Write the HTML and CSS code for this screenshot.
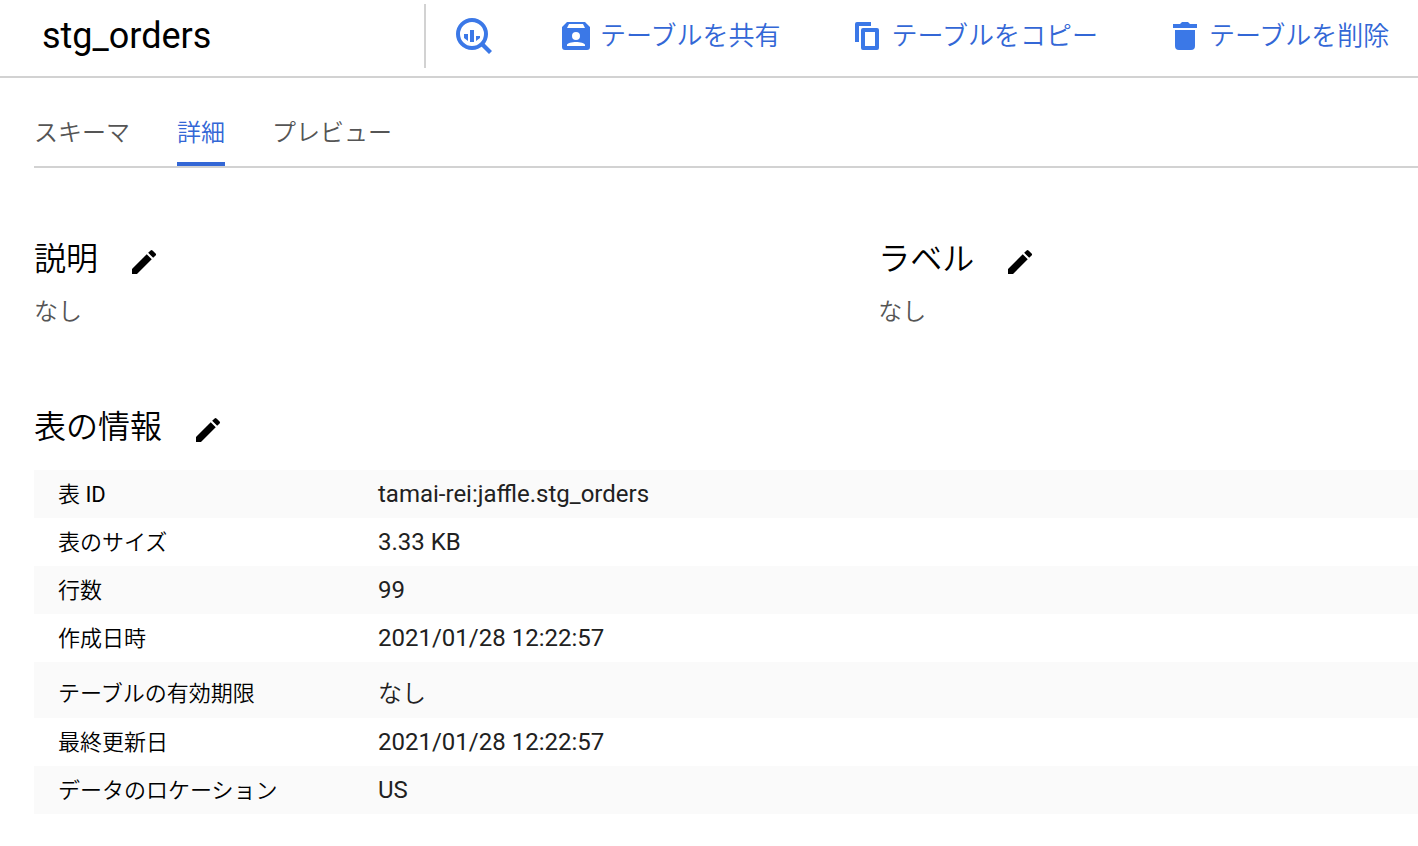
FILE: index.html
```html
<!DOCTYPE html>
<html lang="ja">
<head>
<meta charset="utf-8">
<title>stg_orders</title>
<link rel="stylesheet" href="styles.css">
</head>
<body>
<svg class="sprite" aria-hidden="true">
  <symbol id="pencil" viewBox="0 0 24 24"><path d="M3 17.25V21h3.75L17.81 9.94l-3.75-3.75L3 17.25zM20.71 7.04a1 1 0 0 0 0-1.41l-2.34-2.34a1 1 0 0 0-1.41 0l-1.83 1.83 3.75 3.75 1.83-1.83z"/></symbol>
</svg>
<header class="toolbar">
  <h1 class="title">stg_orders</h1>
  <div class="tools">
    <button class="tool" type="button" aria-label="クエリ">
      <svg class="icon-query" viewBox="0 0 36 36"><circle cx="16" cy="16" r="14" fill="none" stroke="currentColor" stroke-width="4"/><path d="M8 16h4v7l-4-3zM14 12h4v12h-4zM20 18h4v2l-4 3zM24 27l3-3 9 9-3 3z"/></svg>
    </button>
    <nav class="actions" aria-label="テーブル操作">
      <button class="tool" type="button">
        <svg class="icon" viewBox="0 0 28 28"><path fill-rule="evenodd" d="M5 0h18l5 5v20a3 3 0 0 1-3 3H3a3 3 0 0 1-3-3V5zM7 2 5 6h18l-2-4zM14 10a4 4 0 1 0 0 8 4 4 0 0 0 0-8zM5 24h18v-1c0-2-5-3-9-3s-9 1-9 3z"/></svg>
        テーブルを共有
      </button>
      <button class="tool" type="button">
        <svg class="icon" viewBox="0 0 28 28"><path fill-rule="evenodd" d="M4 0h14v4H6v16H2V2a2 2 0 0 1 2-2zM10 6h14a2 2 0 0 1 2 2v18a2 2 0 0 1-2 2H10a2 2 0 0 1-2-2V8a2 2 0 0 1 2-2zm2 4v14h10V10z"/></svg>
        テーブルをコピー
      </button>
      <button class="tool" type="button">
        <svg class="icon" viewBox="0 0 28 28"><path d="M2 2h7l2-2h6l2 2h7v4H2zM4 8h20v16a4 4 0 0 1-4 4H8a4 4 0 0 1-4-4z"/></svg>
        テーブルを削除
      </button>
    </nav>
  </div>
</header>
<main class="content">
  <nav class="tabs">
    <a class="tab" href="#schema">スキーマ</a>
    <a class="tab tab-active" href="#details" aria-current="page">詳細</a>
    <a class="tab" href="#preview">プレビュー</a>
  </nav>
  <div class="meta">
    <section>
      <div class="heading"><h2>説明</h2><button class="edit" type="button" aria-label="説明を編集"><svg><use href="#pencil"/></svg></button></div>
      <p class="none">なし</p>
    </section>
    <section>
      <div class="heading"><h2>ラベル</h2><button class="edit" type="button" aria-label="ラベルを編集"><svg><use href="#pencil"/></svg></button></div>
      <p class="none">なし</p>
    </section>
  </div>
  <section class="info">
    <div class="heading"><h2>表の情報</h2><button class="edit" type="button" aria-label="表の情報を編集"><svg><use href="#pencil"/></svg></button></div>
    <table class="table">
      <tbody>
        <tr><th scope="row">表 <span class="latin">ID</span></th><td>tamai-rei:jaffle.stg_orders</td></tr>
        <tr><th scope="row">表のサイズ</th><td>3.33 KB</td></tr>
        <tr><th scope="row">行数</th><td>99</td></tr>
        <tr><th scope="row">作成日時</th><td>2021/01/28 12:22:57</td></tr>
        <tr class="expiry"><th scope="row">テーブルの有効期限</th><td>なし</td></tr>
        <tr><th scope="row">最終更新日</th><td>2021/01/28 12:22:57</td></tr>
        <tr><th scope="row">データのロケーション</th><td>US</td></tr>
      </tbody>
    </table>
  </section>
</main>
</body>
</html>
```
FILE: styles.css
```css
* { box-sizing: border-box; }
body {
  margin: 0;
  background: #fff;
  color: #000;
  font-family: Roboto, "Noto Sans CJK JP", sans-serif;
}
h1, h2, p { margin: 0; font-weight: 400; }
button {
  padding: 0;
  border: 0;
  background: none;
  font: inherit;
  color: inherit;
  cursor: pointer;
}
svg { display: block; fill: currentColor; }
.sprite { display: none; }

.toolbar {
  display: flex;
  height: 78px;
  padding: 4px 0 8px;
  border-bottom: 2px solid #d2d2d2;
}
.title {
  flex: 0 0 426px;
  padding-left: 42px;
  border-right: 2px solid #d2d2d2;
  font-size: 36px;
  line-height: 64px;
}
.tools {
  display: flex;
  align-items: center;
  gap: 70px;
  padding-left: 30px;
  color: #3367d6;
}
.actions { display: flex; gap: 73px; }
.tool {
  display: flex;
  align-items: center;
  gap: 10px;
  font-size: 26px;
  font-weight: 350;
  line-height: 36px;
  white-space: nowrap;
}
.icon { width: 28px; height: 28px; color: #3b78e7; }
.icon-query { width: 36px; height: 36px; color: #3b78e7; }

.content { padding-left: 34px; }
.tabs {
  display: flex;
  gap: 47px;
  padding-top: 34px;
  border-bottom: 2px solid #d2d2d2;
}
.tab {
  height: 54px;
  font-size: 24px;
  font-weight: 350;
  line-height: 42px;
  color: #555;
  text-decoration: none;
}
.tab-active { border-bottom: 4px solid #3367d6; color: #3367d6; }

.meta {
  display: grid;
  grid-template-columns: 61fr 39fr;
  padding-top: 66px;
}
.heading { display: flex; align-items: flex-start; gap: 30px; }
h2 { font-size: 32px; line-height: 50px; font-weight: 350; }
.edit { padding-top: 12px; }
.edit svg { width: 32px; height: 32px; }
.none {
  padding-top: 12px;
  font-size: 24px;
  font-weight: 350;
  line-height: 32px;
  color: #555;
}
.info { padding-top: 74px; }
.table {
  width: 100%;
  margin-top: 18px;
  border-collapse: collapse;
}
.table tr { height: 48px; }
.table tr:nth-child(odd) { background: #fafafa; }
.table th, .table td { padding: 0; line-height: 36px; text-align: left; }
.table th {
  width: 344px;
  padding: 2px 0 0 24px;
  font-size: 22px;
  font-weight: 350;
}
.latin { font-weight: 400; }
.table td { font-size: 24px; color: #212121; }
.table .expiry { height: 56px; }
.table .expiry th, .table .expiry td { padding-top: 8px; }
.table .expiry td { font-weight: 350; }
```
